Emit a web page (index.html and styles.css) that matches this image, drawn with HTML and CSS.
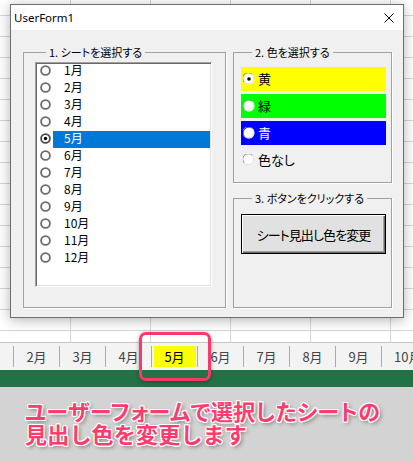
FILE: index.html
```html
<!DOCTYPE html>
<html lang="ja">
<head>
<meta charset="utf-8">
<title>UserForm1</title>
<link rel="stylesheet" href="styles.css">
</head>
<body>
<div class="sheet">
  <div class="dialog">
    <div class="titlebar">
      <span class="title">UserForm1</span>
      <svg class="close" width="10" height="10" viewBox="0 0 10 10"><path d="M0.5 0.5 L9.5 9.5 M9.5 0.5 L0.5 9.5" stroke="#000" stroke-width="1" fill="none"/></svg>
    </div>
    <div class="client">
      <fieldset class="frame frame-sheet">
        <legend>1. シートを選択する</legend>
        <div class="listbox">
          <div class="opt-row"><svg class="lrb" viewBox="0 0 11 11"><circle cx="5.5" cy="5.5" r="4.4" fill="none" stroke="#6b6b6b" stroke-width="1.8"/></svg><span class="opt-label">1月</span></div>
          <div class="opt-row"><svg class="lrb" viewBox="0 0 11 11"><circle cx="5.5" cy="5.5" r="4.4" fill="none" stroke="#6b6b6b" stroke-width="1.8"/></svg><span class="opt-label">2月</span></div>
          <div class="opt-row"><svg class="lrb" viewBox="0 0 11 11"><circle cx="5.5" cy="5.5" r="4.4" fill="none" stroke="#6b6b6b" stroke-width="1.8"/></svg><span class="opt-label">3月</span></div>
          <div class="opt-row"><svg class="lrb" viewBox="0 0 11 11"><circle cx="5.5" cy="5.5" r="4.4" fill="none" stroke="#6b6b6b" stroke-width="1.8"/></svg><span class="opt-label">4月</span></div>
          <div class="opt-row sel"><svg class="lrb" viewBox="0 0 11 11"><circle cx="5.5" cy="5.5" r="4.4" fill="none" stroke="#4a4a4a" stroke-width="1.8"/><circle cx="5.5" cy="5.5" r="1.7" fill="#000"/></svg><span class="opt-label">5月</span></div>
          <div class="opt-row"><svg class="lrb" viewBox="0 0 11 11"><circle cx="5.5" cy="5.5" r="4.4" fill="none" stroke="#6b6b6b" stroke-width="1.8"/></svg><span class="opt-label">6月</span></div>
          <div class="opt-row"><svg class="lrb" viewBox="0 0 11 11"><circle cx="5.5" cy="5.5" r="4.4" fill="none" stroke="#6b6b6b" stroke-width="1.8"/></svg><span class="opt-label">7月</span></div>
          <div class="opt-row"><svg class="lrb" viewBox="0 0 11 11"><circle cx="5.5" cy="5.5" r="4.4" fill="none" stroke="#6b6b6b" stroke-width="1.8"/></svg><span class="opt-label">8月</span></div>
          <div class="opt-row"><svg class="lrb" viewBox="0 0 11 11"><circle cx="5.5" cy="5.5" r="4.4" fill="none" stroke="#6b6b6b" stroke-width="1.8"/></svg><span class="opt-label">9月</span></div>
          <div class="opt-row"><svg class="lrb" viewBox="0 0 11 11"><circle cx="5.5" cy="5.5" r="4.4" fill="none" stroke="#6b6b6b" stroke-width="1.8"/></svg><span class="opt-label">10月</span></div>
          <div class="opt-row"><svg class="lrb" viewBox="0 0 11 11"><circle cx="5.5" cy="5.5" r="4.4" fill="none" stroke="#6b6b6b" stroke-width="1.8"/></svg><span class="opt-label">11月</span></div>
          <div class="opt-row"><svg class="lrb" viewBox="0 0 11 11"><circle cx="5.5" cy="5.5" r="4.4" fill="none" stroke="#6b6b6b" stroke-width="1.8"/></svg><span class="opt-label">12月</span></div>
        </div>
      </fieldset>
      <div class="col">
        <fieldset class="frame frame-color">
          <legend>2. 色を選択する</legend>
          <div class="swatch sw-yellow"><svg class="crb" viewBox="0 0 12 12"><circle cx="6" cy="6" r="5.5" fill="#fff"/><path d="M1.3 9.2 A5.2 5.2 0 0 1 9.2 1.3" fill="none" stroke="#8a8a8a" stroke-width="1"/><path d="M9.2 1.3 A5.2 5.2 0 0 1 1.3 9.2" fill="none" stroke="#dcdcdc" stroke-width="1"/><circle cx="6" cy="6" r="1.8" fill="#000"/></svg><span>黄</span></div>
          <div class="swatch sw-green"><svg class="crb" viewBox="0 0 12 12"><circle cx="6" cy="6" r="5.5" fill="#fff"/><path d="M1.3 9.2 A5.2 5.2 0 0 1 9.2 1.3" fill="none" stroke="#8a8a8a" stroke-width="1"/><path d="M9.2 1.3 A5.2 5.2 0 0 1 1.3 9.2" fill="none" stroke="#dcdcdc" stroke-width="1"/></svg><span>緑</span></div>
          <div class="swatch sw-blue"><svg class="crb" viewBox="0 0 12 12"><circle cx="6" cy="6" r="5.5" fill="#fff"/><path d="M1.3 9.2 A5.2 5.2 0 0 1 9.2 1.3" fill="none" stroke="#8a8a8a" stroke-width="1"/><path d="M9.2 1.3 A5.2 5.2 0 0 1 1.3 9.2" fill="none" stroke="#dcdcdc" stroke-width="1"/></svg><span>青</span></div>
          <div class="swatch sw-none"><svg class="crb" viewBox="0 0 12 12"><circle cx="6" cy="6" r="5.5" fill="#fff"/><path d="M1.3 9.2 A5.2 5.2 0 0 1 9.2 1.3" fill="none" stroke="#8a8a8a" stroke-width="1"/><path d="M9.2 1.3 A5.2 5.2 0 0 1 1.3 9.2" fill="none" stroke="#dcdcdc" stroke-width="1"/></svg><span>色なし</span></div>
        </fieldset>
        <fieldset class="frame frame-action">
          <legend>3. ボタンをクリックする</legend>
          <button class="btn" type="button">シート見出し色を変更</button>
        </fieldset>
      </div>
    </div>
  </div>
</div>
<div class="tabs">
  <div class="tab">2月</div>
  <div class="tab">3月</div>
  <div class="tab">4月</div>
  <div class="tab active"><span class="tab-inner">5月</span></div>
  <div class="tab">6月</div>
  <div class="tab">7月</div>
  <div class="tab">8月</div>
  <div class="tab">9月</div>
  <div class="tab">10月</div>
</div>
<div class="statusbar"></div>
<div class="note"><div class="note-line line-1">ユーザーフォームで選択したシートの</div><div class="note-line line-2">見出し色を変更します</div></div>
<div class="callout"></div>
</body>
</html>
```

FILE: styles.css
```css
* { box-sizing: border-box; }
html, body { margin: 0; padding: 0; }
body {
  width: 413px;
  height: 462px;
  overflow: hidden;
  position: relative;
  background: #fff;
  font-family: "Noto Sans CJK JP", sans-serif;
  color: #000;
}

.sheet {
  height: 342px;
  padding: 4px 0 0 10px;
  background-color: #fff;
  background-image:
    linear-gradient(to bottom, #d6d6d6 1px, transparent 1px),
    linear-gradient(to right, #d6d6d6 1px, transparent 1px);
  background-size: 100% 21px, 80px 100%;
  background-position: 0 15px, 70px 0;
}

.dialog {
  width: 394px;
  height: 314px;
  border: 1px solid #6e6e6e;
  background: #f0f0f0;
  box-shadow: 0 2px 12px rgba(0, 0, 0, 0.3);
  display: flex;
  flex-direction: column;
}

.titlebar {
  height: 25px;
  flex: none;
  background: #fff;
  display: flex;
  align-items: center;
  justify-content: space-between;
  padding: 0 9px 0 3px;
}
.title {
  font-family: "Noto Sans", sans-serif;
  font-size: 11.5px;
  color: #000;
}
.close { display: block; }

.client {
  flex: 1;
  display: flex;
  padding: 15px 0 0 12px;
}

.frame {
  margin: 0;
  padding: 0;
  min-width: 0;
  border: 1px solid #a0a0a0;
  box-shadow: 1px 1px 0 #fff;
}
.frame legend {
  margin-left: 11px;
  padding: 0 3px;
  font-size: 11px;
  line-height: 14px;
  font-feature-settings: "palt";
}

.frame-sheet {
  width: 203px;
  height: 263px;
  flex: none;
  padding: 3px 0 0 11px;
}

.listbox {
  width: 177px;
  height: 225px;
  background: #fff;
  border: 1px solid;
  border-color: #a0a0a0 #fff #fff #a0a0a0;
  box-shadow: inset 1px 1px 0 #696969, inset -1px -1px 0 #e3e3e3;
}

.opt-row {
  display: flex;
  height: 17px;
}
.lrb {
  width: 11px;
  height: 11px;
  flex: none;
  margin: 2px 0 0 4px;
}
.opt-label {
  flex: 1;
  margin-left: 2px;
  margin-right: 1px;
  padding-left: 11px;
  font-size: 12px;
  line-height: 14px;
}
.opt-row.sel .opt-label {
  background: #0078d7;
  color: #fff;
}

.col {
  display: flex;
  flex-direction: column;
  gap: 8px;
  margin-left: 7px;
  width: 159px;
}

.frame-color {
  height: 138px;
  padding: 8px 0 0 7px;
}
.swatch {
  width: 145px;
  height: 24px;
  margin-bottom: 3px;
  display: flex;
  align-items: center;
  gap: 3px;
  padding-left: 2px;
  font-size: 13px;
  line-height: 16px;
  font-feature-settings: "palt";
}
.sw-yellow { background: #ffff00; }
.sw-green { background: #00ff00; }
.sw-blue { background: #0000ff; color: #fff; }
.crb {
  width: 12px;
  height: 12px;
  flex: none;
}

.frame-action {
  height: 117px;
  padding: 9px 0 0 7px;
}
.btn {
  display: block;
  width: 145px;
  height: 40px;
  margin: 0;
  padding: 0;
  border: 1px solid #000;
  background: #e1e1e1;
  box-shadow: inset 1px 1px 0 #fff, inset -1px -1px 0 #696969, inset -2px -2px 0 #a0a0a0;
  font-family: "Noto Sans CJK JP", sans-serif;
  font-size: 13px;
  letter-spacing: -0.9px;
  font-feature-settings: "palt";
  color: #000;
}

.tabs {
  height: 28px;
  border-top: 1px solid #c6c6c6;
  background: #f3f3f3;
  display: flex;
  padding: 3px 0 0 13px;
  overflow: hidden;
}
.tab {
  width: 46px;
  height: 21px;
  flex: none;
  border-left: 1px solid #ababab;
  display: flex;
  align-items: center;
  justify-content: center;
  font-size: 13px;
  color: #444;
  white-space: nowrap;
  overflow: hidden;
}
.tab:last-child {
  justify-content: flex-start;
  padding-left: 12px;
}
.tab-inner {
  width: 42px;
  height: 21px;
  background: #ffff00;
  color: #000;
  display: flex;
  align-items: center;
  justify-content: center;
}

.statusbar {
  height: 17px;
  background: #217346;
}

.note {
  height: 75px;
  background: #d3d3d3;
  padding: 12px 0 0 25px;
  font-size: 22px;
  font-weight: bold;
  color: #ff3b6f;
  text-shadow:
    1px 0 0 #fff, -1px 0 0 #fff, 0 1px 0 #fff, 0 -1px 0 #fff,
    1px 1px 0 #fff, -1px -1px 0 #fff, 1px -1px 0 #fff, -1px 1px 0 #fff,
    2px 2px 4px rgba(0, 0, 0, 0.45);
}
.note-line {
  height: 23px;
  line-height: 22px;
  white-space: nowrap;
}
.line-1 {
  font-feature-settings: "palt";
  letter-spacing: 0.4px;
}
.line-2 {
  letter-spacing: 0.2px;
}

.callout {
  position: absolute;
  left: 139px;
  top: 332px;
  width: 72px;
  height: 49px;
  border: 3px solid #f7396b;
  border-radius: 7px;
  box-shadow: 0 1px 4px rgba(0, 0, 0, 0.35);
}
```
